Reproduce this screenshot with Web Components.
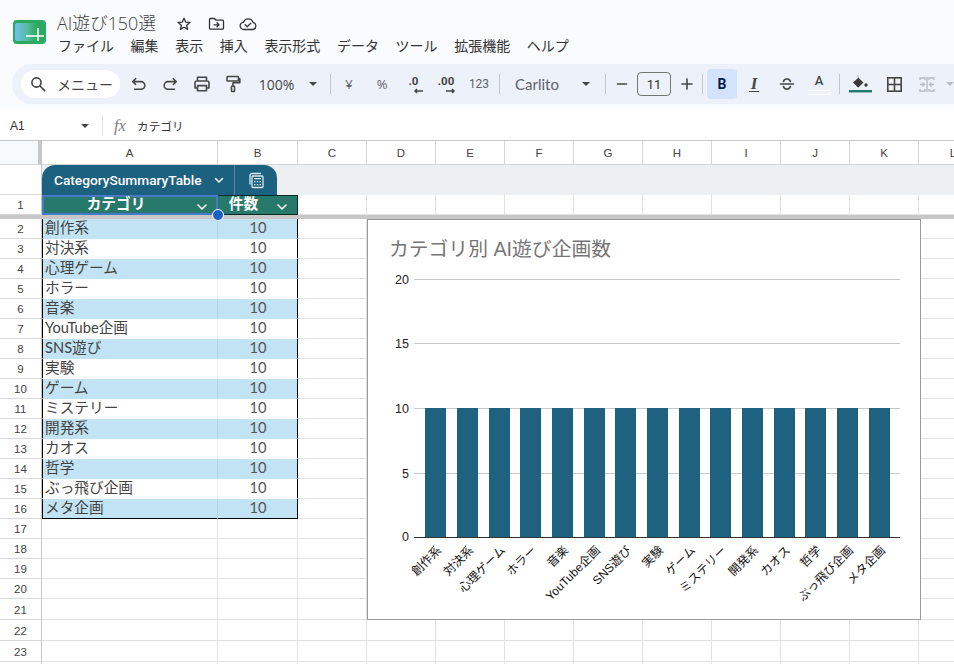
<!DOCTYPE html>
<html lang="ja"><head><meta charset="utf-8"><title>AI遊び150選</title>
<style>html,body{margin:0;padding:0;background:#fff}body{width:954px;height:664px;overflow:hidden;font-family:"Open Sans","Noto Sans CJK JP",sans-serif}</style>
</head><body>
<sheet-app>
  <app-titlebar></app-titlebar>
  <app-toolbar></app-toolbar>
  <app-formula></app-formula>
  <sheet-grid><chart-panel></chart-panel></sheet-grid>
</sheet-app>
<script>
const def=(name,html,init)=>customElements.define(name,class extends HTMLElement{
  constructor(){super();const r=this.attachShadow({mode:'open'});r.innerHTML=html;if(init)init(r)}
});
const svg=(w,h,body,vb,sw)=>`<svg width="${w}" height="${h}" viewBox="${vb||`0 0 ${w} ${h}`}" fill="none" stroke="currentColor" stroke-width="${sw||1.6}" stroke-linecap="round" stroke-linejoin="round" aria-hidden="true">${body}</svg>`;
const CJK='"Noto Sans CJK JP"';

def('sheet-app',`<style>:host{display:flex;flex-direction:column;width:954px;height:664px;overflow:hidden;background:#fff}</style><slot></slot>`);

def('app-titlebar',`<style>
:host{display:flex;height:64px;flex:none;background:#f9fbfd;color:#444746;box-sizing:border-box;padding:13px 0 0 13px;gap:11px}
.logo{margin-top:7px;flex:none;height:24px}
.col{display:flex;flex-direction:column}
.top{display:flex;align-items:center;height:21px}
.name{font:300 17.8px/21px "Open Sans",${CJK},sans-serif;width:111px;color:#3c4043}
.ic{width:32px;display:flex;justify-content:center;color:#333}
nav{display:flex;margin:1px 0 0 1px;gap:16.6px;font:400 14px/20px ${CJK},sans-serif;color:#333}
</style>
<svg class="logo" width="33" height="24" viewBox="0 0 33 24"><defs><linearGradient id="g" x1="0" x2="1" y1="0" y2="0"><stop offset="0" stop-color="#6fc0ee"/><stop offset=".55" stop-color="#55bb98"/><stop offset="1" stop-color="#2fae66" stop-opacity="0"/></linearGradient></defs><rect width="33" height="24" rx="4" fill="#2bab62"/><rect x="2" y="3" width="24" height="18" rx="2" fill="url(#g)"/><path d="M13 16H31M25 8V21" stroke="#fff" stroke-width="1.6"/></svg>
<div class="col"><div class="top"><span class="name">AI遊び150選</span>
<span class="ic">${svg(16,16,'<path d="M8 2.2l1.7 3.9 4.2.4-3.2 2.8.95 4.1L8 11.2l-3.65 2.2.95-4.1L2.1 6.5l4.2-.4z"/>',0,1.3)}</span>
<span class="ic">${svg(17,15,'<path d="M1.5 3.5a1 1 0 011-1h4l1.6 1.7h6.4a1 1 0 011 1v7a1 1 0 01-1 1h-12a1 1 0 01-1-1zM6 8.8h5M9 6.8l2 2-2 2"/>',0,1.3)}</span>
<span class="ic">${svg(18,14,'<path d="M5 12.5a3.6 3.6 0 01-.5-7.2A5 5 0 0114 5.4a3.6 3.6 0 01-.4 7.1zM6.2 7.8l2 2 3.6-3.6"/>',0,1.3)}</span></div>
<nav><span>ファイル</span><span>編集</span><span>表示</span><span>挿入</span><span>表示形式</span><span>データ</span><span>ツール</span><span>拡張機能</span><span>ヘルプ</span></nav></div>`);

def('app-toolbar',`<style>
:host{display:block;height:46px;flex:none;background:linear-gradient(#f9fbfd 40px,#fff 46px);position:relative}
.bar{margin-left:12px;height:40px;background:#edf2fa;border-radius:20px 0 0 20px;display:flex;align-items:center;padding-left:9px;overflow:hidden;color:#444746;font:400 13.5px "Open Sans",${CJK},sans-serif}
.i{flex:none;display:flex;align-items:center;justify-content:center;height:28px;box-sizing:border-box}
.pill{background:#fff;border-radius:14px;color:#444;justify-content:flex-start;padding-left:9px;gap:11px;font:400 14px ${CJK},sans-serif}
.sep{width:1px;height:20px;background:#c7c7c7;flex:none}
.caret{width:0;height:0;border:4px solid transparent;border-top:4.5px solid #444746;border-bottom:0}
.dim{color:#5f6368}
.box{border:1px solid #747775;border-radius:4px;height:24px;font:400 13px Roboto,sans-serif;color:#333}
.b{background:#d3e3fd;border-radius:4px;color:#041e49;height:30px;font:700 14px Roboto,sans-serif}
.dec{font:700 11.5px/11px Roboto,sans-serif;color:#444746;flex-direction:column;align-items:center;padding-top:1px}
.dec svg{display:block;margin-top:1px}
</style><div class="bar"></div>`,r=>{
  const bar=r.querySelector('.bar');
  const it=[
   [99,`${svg(16,16,'<circle cx="6.5" cy="6.5" r="4.6"/><path d="M10 10l4.6 4.6"/>')}<span>メニュー</span>`,'pill'],
   [3,''],
   [31,svg(16,16,'<path d="M4.7 2.7L1.8 5.6l2.9 2.9M2.2 5.6H10a3.8 3.8 0 010 7.6H3.6"/>')],
   [31,svg(16,16,'<path d="M11.3 2.7l2.9 2.9-2.9 2.9M13.8 5.6H6a3.8 3.8 0 000 7.6h6.4"/>')],
   [33,svg(18,18,'<path d="M4.5 6V2.2h9V6M4.5 13H2V7.8a1.8 1.8 0 011.8-1.8h10.4A1.8 1.8 0 0116 7.8V13h-2.5"/><rect x="4.5" y="10.6" width="9" height="5.2"/>')],
   [31,`<span style="display:flex;margin-right:2px">${svg(16,18,'<rect x="2" y="1.5" width="11.5" height="4.5" rx=".7"/><path d="M13.5 3.8h1.3v4H8v3"/><rect x="6.5" y="11" width="3" height="5.5" rx=".7"/>')}</span>`],
   [56,'<span style="font-size:14px;margin-left:-1px">100%</span>'],
   [15,'<span class="caret"></span>'],[10,''],
   ['s'],
   [36,'<span class="dim" style="font-size:13px">¥</span>'],
   [30,'<span class="dim" style="font-size:13px">%</span>'],
   [33,`<span>.0</span><svg width="10" height="6" viewBox="0 0 10 6" fill="none" stroke="#444746" stroke-width="1.5" style="margin-left:9px"><path d="M10 3H2M4 1L2 3l2 2"/></svg>`,'dec'],
   [32,`<span>.00</span><svg width="10" height="6" viewBox="0 0 10 6" fill="none" stroke="#444746" stroke-width="1.5" style="margin-left:9px"><path d="M0 3h8M6 1l2 2-2 2"/></svg>`,'dec'],
   [34,'<span class="dim" style="font:400 12px Roboto,sans-serif">123</span>'],[3,''],
   ['s'],
   [75,'<span class="dim" style="font:400 15px Lato,sans-serif;margin-left:-1px">Carlito</span>'],
   [22,'<span class="caret"></span>'],[8,''],
   ['s'],
   [31,svg(14,14,'<path d="M2.5 7h9"/>')],
   [34,'11','box'],
   [31,svg(14,14,'<path d="M2 7h10M7 2v10"/>')],
   ['s'],[4,''],
   [30,'B','b'],
   [34,'<i style="font:italic 700 17px \'Liberation Serif\',serif;border-bottom:1.6px solid #444746;line-height:14px;padding:0 2px">I</i>'],
   [31,svg(18,18,'<path d="M2.5 9h13M5.5 6.5A3.4 3.4 0 019 4a3.4 3.4 0 013.4 2.5M5.5 11.5A3.4 3.4 0 009 14a3.4 3.4 0 003.4-2.5"/>')],
   [34,`<span style="display:flex;flex-direction:column;align-items:center;font:500 13px/14px Roboto,sans-serif;color:#444746;margin-top:1px">A<span style="width:22px;height:3px;border-top:1px solid #fff;border-bottom:1px solid #fff;margin-top:2px"></span></span>`],
   [3,''],['s'],
   [40,`<span style="display:flex;flex-direction:column;align-items:center;gap:2px;margin-top:-1px"><svg width="18" height="14" viewBox="0 0 18 14"><path d="M5.5 0l1 1-1 1 6 5.5-4.6 4.6a1 1 0 01-1.4 0L1 7.5 6.5 2.5z" fill="#3c3c3c" transform="translate(1,1)"/><circle cx="15" cy="11" r="1.7" fill="#3c3c3c"/></svg><span style="width:23px;height:3px;background:#1f7d72;border-bottom:1px solid #9fb7b4;box-sizing:border-box"></span></span>`],
   [28,`<svg width="15" height="15" viewBox="0 0 15 15" fill="none" stroke="#444" stroke-width="1.6"><rect x=".8" y=".8" width="13.4" height="13.4"/><path d="M7.5 1v13M1 7.5h13"/></svg>`],
   [38,`<svg width="16" height="15" viewBox="0 0 16 15" fill="none" stroke="#b9bdc1" stroke-width="1.4"><path d="M1 3V1h5v2M1 12v2h5v-2M10 3V1h5v2M10 12v2h5v-2M1 7.5h4M3.5 5.5l2 2-2 2M15 7.5h-4M12.5 5.5l-2 2 2 2M8 0v15"/></svg>`],
   [8,'<span class="caret" style="border-top-color:#b9bdc1"></span>'],
  ];
  bar.innerHTML=it.map(([w,h,c])=>w==='s'?'<span class="sep"></span>':`<span class="i ${c||''}" style="width:${w}px">${h||''}</span>`).join('');
});

def('app-formula',`<style>
:host{display:flex;align-items:center;height:31px;flex:none;background:#fff;box-sizing:border-box;border-bottom:1px solid #c7c7c7;color:#333;font:400 12px "Liberation Sans",${CJK},sans-serif;padding-top:2px}
.name{width:72px;padding-left:10px;flex:none;box-sizing:border-box}
.caret{width:0;height:0;border:4px solid transparent;border-top:4.5px solid #444746;border-bottom:0;flex:none;margin-left:9px}
.sep{width:1px;height:20px;background:#e1e3e1;margin-left:13px;flex:none}
.fx{font:italic 400 16.5px "Liberation Serif",serif;color:#7a7d80;margin-left:11px;width:24px;flex:none}
.t{font:400 11.5px ${CJK},sans-serif;letter-spacing:.2px;color:#333;margin-left:-1px}
</style><span class="name">A1</span><span class="caret"></span><span class="sep"></span><span class="fx">fx</span><span class="t">カテゴリ</span>`);

const cats=['創作系','対決系','心理ゲーム','ホラー','音楽','YouTube企画','SNS遊び','実験','ゲーム','ミステリー','開発系','カオス','哲学','ぶっ飛び企画','メタ企画'];

def('sheet-grid',`<style>
:host{display:block;position:relative;flex:1;overflow:hidden;background:#fff}
.g{display:grid;grid-template-columns:42px 176px 80px repeat(10,69px);width:max-content;font:400 12px "Liberation Sans",sans-serif;color:#444}
.g>div{box-sizing:border-box;border-right:1px solid #e1e3e1;border-bottom:1px solid #e1e3e1}
.ch{display:flex;align-items:center;justify-content:center;border-color:#d3d5d7!important;font-size:11.5px;padding-top:1px}
.corner{background:#f8f9fa;border-right:4px solid #c7c7c7!important}
.rh{display:flex;align-items:center;justify-content:center;border-right-color:#c7c7c7!important;border-bottom-color:#d6d8da!important;padding-top:1px;font-size:11.5px}
.band{grid-column:2/-1;background:#eeeff0;border:0!important;display:flex}
.tab{width:235px;height:30px;background:#1c6180;border-radius:13px 13px 0 0;display:flex;color:#fff;font:500 13.7px Roboto,"Open Sans",sans-serif;align-items:center}
.tab .nm{width:193px;padding-left:12px;box-sizing:border-box;display:flex;align-items:center;justify-content:space-between;padding-right:9px;height:100%;border-right:1px solid #5b8aa3}
.tab .cal{flex:1;display:flex;justify-content:center;align-items:center}
.th{background:#277a6b;color:#fff;font:700 14.67px/18px ${CJK},sans-serif;display:flex;align-items:center;justify-content:center;position:relative;border:1px solid #0a2a26!important;border-left-width:0!important;padding:0 28px 4px 0}
.th .v{position:absolute;right:9px;top:5px;display:flex}
.th.a{border:2px solid #4878c9!important;z-index:2;padding-right:28px}
.th.a .v{top:4px;right:8px}
.dot{position:absolute;right:-8px;bottom:-8px;width:10px;height:10px;background:#1a5fc8;border:1px solid #fff;border-radius:50%;z-index:3}
.bar{grid-column:1/-1;background:#c7c7c7;border:0!important}
.c{font:400 14.67px/18px Lato,${CJK},sans-serif;color:#434343;padding-left:2px;white-space:nowrap;overflow:hidden;border-color:transparent!important}
.c.x{border-left:1px solid #000!important;border-right-color:rgba(0,0,0,.06)!important}
.c.b{text-align:center;padding:0 0 0 1px;border-right:1px solid #000!important;color:#555}
.c.o{background:#c1e3f3}
.c.last{border-bottom:1px solid #000!important}
</style><div class="g"></div><slot></slot>`,r=>{
  const g=r.querySelector('.g');
  const cols='ABCDEFGHIJKL'.split('');
  let h='<div class="ch corner"></div>'+cols.map(c=>`<div class="ch">${c}</div>`).join('');
  h+=`<div class="rh"></div><div class="band"><div class="tab"><div class="nm"><span>CategorySummaryTable</span>${svg(12,12,'<path d="M2.5 4.5L6 8l3.5-3.5"/>')}</div><div class="cal"><svg width="18" height="18" viewBox="0 0 18 18" fill="none" stroke="#dce9ef" stroke-width="1.3"><path d="M3 13.5V4.5A2 2 0 015 2.5h9"/><rect x="5" y="5" width="11" height="11.5" rx="1"/><path d="M7 7.6h7M7 10.6h1.5M9.8 10.6h1.5M12.5 10.6H14M7 13.6h1.5M9.8 13.6h1.5M12.5 13.6H14"/></svg></div></div></div>`;
  const chev=svg(12,12,'<path d="M2 4l4 4 4-4"/>');
  const blanks=n=>'<div></div>'.repeat(n);
  h+=`<div class="rh">1</div><div class="th a">カテゴリ<span class="v">${chev}</span><span class="dot"></span></div><div class="th">件数<span class="v">${chev}</span></div>`+blanks(10);
  h+='<div class="bar"></div>';
  cats.forEach((c,i)=>{
    const o=i%2==0?'o':'',l=i==14?'last':'';
    h+=`<div class="rh">${i+2}</div><div class="c x ${o} ${l}">${c}</div><div class="c b ${o} ${l}">10</div>`+blanks(10);
  });
  for(let n=17;n<=24;n++) h+=`<div class="rh">${n<24?n:''}</div>`+blanks(12);
  g.innerHTML=h;
  g.style.gridTemplateRows=`24px 30px 20px 4px repeat(19,20px) repeat(4,21px)`;
});

def('chart-panel',`<style>
:host{position:absolute;left:367px;top:78px;width:554px;height:401px;box-sizing:border-box;background:#fff;border:1px solid #9a9a9a;display:block}
svg{display:block}
text{font-family:"Liberation Sans",${CJK},sans-serif}
</style><svg id="s" width="552" height="399" viewBox="368 220 552 399"></svg>`,r=>{
  const xs=[425,457,489,520,552,584,615,647,679,710,742,774,805,837,869];
  let h=`<text x="389" y="256" font-size="19.8" fill="#757575">カテゴリ別 AI遊び企画数</text>`;
  [[279,20],[343,15],[408,10],[473,5]].forEach(([y,v])=>{
    h+=`<rect x="414" y="${y}" width="486" height="1" fill="#c9c9c9"/><text x="409" y="${y+5}" font-size="12.5" fill="#222" text-anchor="end">${v}</text>`});
  xs.forEach(x=>h+=`<rect x="${x}" y="408" width="21" height="129" fill="#1f6280"/>`);
  h+=`<rect x="414" y="537" width="486" height="1" fill="#333"/><text x="409" y="541" font-size="12.5" fill="#222" text-anchor="end">0</text>`;
  xs.forEach((x,i)=>{const ax=x+17,ay=551;h+=`<text x="${ax}" y="${ay}" font-size="12" fill="#111" text-anchor="end" transform="rotate(-45 ${ax} ${ay})">${cats[i]}</text>`});
  r.getElementById('s').innerHTML=h;
});
</script>
</body></html>
